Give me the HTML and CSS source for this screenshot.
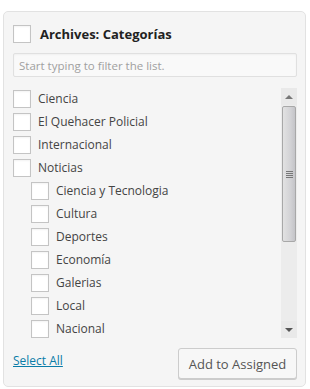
FILE: index.html
```html
<!DOCTYPE html>
<html lang="es">
<head>
    <meta charset="UTF-8">
    <meta name="viewport" content="width=device-width, initial-scale=1.0">
    <title>Archives: Categorías</title>
    <link rel="stylesheet" href="styles.css">
</head>
<body>
    <div class="panel">
        <div class="panel-head">
            <span class="check"></span>
            <h2>Archives: Categorías</h2>
        </div>

        <input type="text" class="filter" placeholder="Start typing to filter the list.">

        <div class="list-box">
            <ul class="terms">
                <li><span class="check"></span>Ciencia</li>
                <li><span class="check"></span>El Quehacer Policial</li>
                <li><span class="check"></span>Internacional</li>
                <li><span class="check"></span>Noticias
                    <ul class="children">
                        <li><span class="check"></span>Ciencia y Tecnologia</li>
                        <li><span class="check"></span>Cultura</li>
                        <li><span class="check"></span>Deportes</li>
                        <li><span class="check"></span>Economía</li>
                        <li><span class="check"></span>Galerias</li>
                        <li><span class="check"></span>Local</li>
                        <li><span class="check"></span>Nacional</li>
                    </ul>
                </li>
            </ul>
            <div class="scrollbar">
                <div class="sb-btn up"></div>
                <div class="sb-track">
                    <div class="sb-thumb"><span class="grip"></span></div>
                </div>
                <div class="sb-btn down"></div>
            </div>
        </div>

        <div class="panel-foot">
            <a href="#" class="select-all">Select All</a>
            <button type="button" class="btn">Add to Assigned</button>
        </div>
    </div>
</body>
</html>
```

FILE: styles.css
```css
body {
    margin: 0;
    background: #fff;
    font-family: "Open Sans", Arial, sans-serif;
    color: #444;
}

.panel {
    box-sizing: border-box;
    width: 303px;
    height: 376px;
    margin: 11px 0 0 3px;
    padding: 13px 8px 8px 9px;
    background: #f5f5f5;
    border: 1px solid #e2e2e2;
    border-radius: 5px;
}

.panel-head {
    display: flex;
    align-items: center;
    height: 18px;
}

.panel-head h2 {
    margin: 0 0 0 9px;
    font-size: 13px;
    font-weight: bold;
    color: #222;
}

.check {
    flex: none;
    display: inline-block;
    box-sizing: border-box;
    width: 18px;
    height: 18px;
    background: #fff;
    border: 1px solid #c4c4c4;
    box-shadow: inset 0 1px 2px rgba(0, 0, 0, 0.05);
}

.filter {
    display: block;
    box-sizing: border-box;
    width: 100%;
    height: 24px;
    margin-top: 10px;
    padding: 0 5px;
    font-family: inherit;
    font-size: 11.5px;
    background: #f9f9f9;
    border: 1px solid #e0e0e0;
    border-radius: 2px;
    box-shadow: inset 0 1px 2px rgba(0, 0, 0, 0.04);
}

.filter::placeholder {
    color: #a0a0a0;
}

.list-box {
    display: flex;
    height: 250px;
    margin-top: 11px;
    overflow: hidden;
}

.terms,
.children {
    list-style: none;
    margin: 0;
    padding: 0;
}

.terms {
    flex: 1;
    padding-top: 2px;
    font-size: 12px;
}

.terms li {
    line-height: 18px;
}

.terms .check {
    margin: 0 7px 5px 0;
    vertical-align: top;
}

.children {
    padding-left: 18px;
}

.scrollbar {
    display: flex;
    flex-direction: column;
    width: 16px;
    background: #ececec;
}

.sb-btn {
    height: 17px;
    background: #e9e9e9;
    display: flex;
    align-items: center;
    justify-content: center;
}

.sb-btn::after {
    content: "";
    border-left: 4px solid transparent;
    border-right: 4px solid transparent;
}

.sb-btn.up::after {
    border-bottom: 4px solid #777;
}

.sb-btn.down::after {
    border-top: 4px solid #555;
}

.sb-track {
    flex: 1;
    padding-top: 1px;
}

.sb-thumb {
    box-sizing: border-box;
    height: 136px;
    margin: 0 1px;
    background: linear-gradient(to right, #e2e2e2, #d3d3d6 60%, #c4c4c8);
    border: 1px solid #a8a8a8;
    border-radius: 2px;
    display: flex;
    align-items: center;
    justify-content: center;
}

.grip {
    width: 7px;
    height: 7px;
    background: repeating-linear-gradient(to bottom, #777 0 1px, transparent 1px 2px);
}

.panel-foot {
    display: flex;
    justify-content: space-between;
    align-items: center;
    margin-top: 10px;
}

.select-all {
    font-size: 12px;
    color: #0a7ca8;
    text-decoration: underline;
    margin-bottom: 6px;
}

.btn {
    height: 31px;
    width: 119px;
    padding: 0;
    font-family: inherit;
    font-size: 13px;
    color: #555;
    background: #f7f7f7;
    border: 1px solid #ccc;
    border-radius: 3px;
    box-shadow: 0 1px 0 #ccc;
}
```
